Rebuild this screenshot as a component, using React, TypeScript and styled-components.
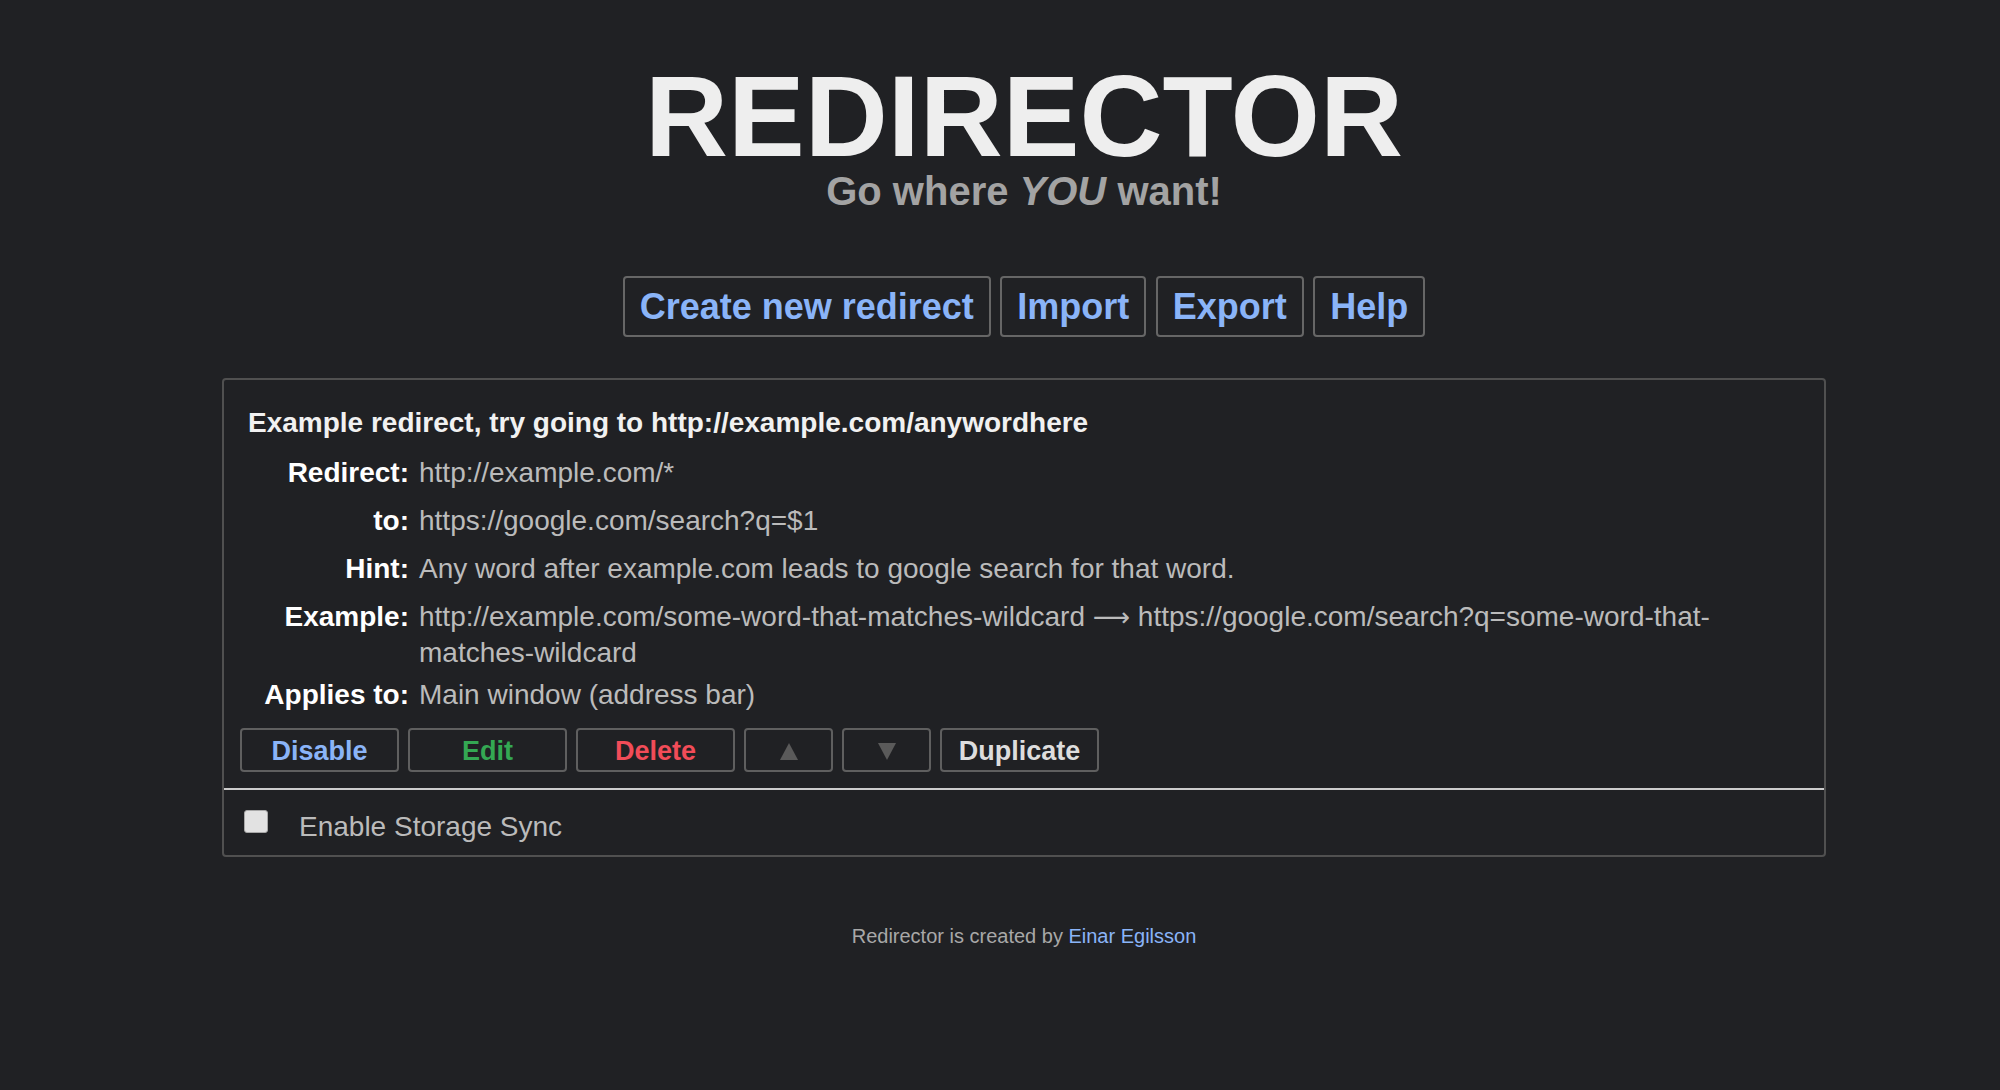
import React from 'react';
import styled, {createGlobalStyle} from 'styled-components';

const GlobalStyle = createGlobalStyle`
  body {
    margin: 0;
    background: #202124;
    font-family: "Liberation Sans", Arial, sans-serif;
    color: #bbbbbb;
  }
`;

type Rule = {
    label: string,
    value: React.ReactNode
}

const Triangle: React.FC<{ down?: boolean }> = ({down}) => (
    <svg width="18" height="17" viewBox="0 0 18 17">
        {down
            ? <polygon points="0,0 18,0 9,17" fill="#5a5a5a"/>
            : <polygon points="9,0 18,17 0,17" fill="#5a5a5a"/>}
    </svg>
);

export default function App() {
    const rules: Rule[] = [
        {label: 'Redirect:', value: 'http://example.com/*'},
        {label: 'to:', value: 'https://google.com/search?q=$1'},
        {label: 'Hint:', value: 'Any word after example.com leads to google search for that word.'},
        {
            label: 'Example:',
            value: <>http://example.com/some-word-that-matches-wildcard <Arrow>⟶</Arrow> https://google.com/search?q=some-word-that-matches-wildcard</>
        },
        {label: 'Applies to:', value: 'Main window (address bar)'},
    ];

    return (
        <>
            <GlobalStyle/>
            <Page>
                <Title>REDIRECTOR</Title>
                <Subtitle>Go where <em>YOU</em> want!</Subtitle>

                <Menu>
                    <MenuButton>Create new redirect</MenuButton>
                    <MenuButton>Import</MenuButton>
                    <MenuButton>Export</MenuButton>
                    <MenuButton>Help</MenuButton>
                </Menu>

                <Card>
                    <RedirectItem>
                        <Details>
                            <ItemTitle>Example redirect, try going to http://example.com/anywordhere</ItemTitle>
                            <RuleGrid>
                                {rules.map(r => (
                                    <React.Fragment key={r.label}>
                                        <Label>{r.label}</Label>
                                        <Value>{r.value}</Value>
                                    </React.Fragment>
                                ))}
                            </RuleGrid>
                        </Details>
                        <Actions>
                            <ActionButton $color="#8ab4f8">Disable</ActionButton>
                            <ActionButton $color="#34a853">Edit</ActionButton>
                            <ActionButton $color="#f24c58">Delete</ActionButton>
                            <ActionButton $narrow><Triangle/></ActionButton>
                            <ActionButton $narrow><Triangle down/></ActionButton>
                            <ActionButton $color="#dddddd">Duplicate</ActionButton>
                        </Actions>
                    </RedirectItem>
                    <SyncRow>
                        <Checkbox type="checkbox"/>
                        <SyncLabel>Enable Storage Sync</SyncLabel>
                    </SyncRow>
                </Card>

                <Footer>
                    Redirector is created by <FooterLink href="#">Einar Egilsson</FooterLink>
                </Footer>
            </Page>
        </>
    )
}

const Page = styled.div`
  padding-left: 48px;
  padding-bottom: 40px;
  display: flex;
  flex-direction: column;
  align-items: center;
`;

const Title = styled.h1`
  margin: 61px 0 0;
  font-size: 115px;
  line-height: 110px;
  font-weight: bold;
  color: #eeeeee;
`;

const Subtitle = styled.div`
  font-size: 40px;
  line-height: 40px;
  font-weight: bold;
  color: #a3a3a3;
`;

const Menu = styled.div`
  margin-top: 65px;
  display: flex;
  gap: 9.5px;
`;

const MenuButton = styled.button`
  font-family: inherit;
  font-size: 36px;
  line-height: 41px;
  font-weight: bold;
  color: #8ab4f8;
  background: transparent;
  border: 2px solid #666666;
  border-radius: 4px;
  padding: 8px 15px 8px;
  cursor: pointer;
`;

const Card = styled.div`
  margin-top: 41px;
  width: 1604px;
  box-sizing: border-box;
  border: 2px solid #505050;
  border-radius: 4px;
`;

const RedirectItem = styled.div`
  padding: 25px 22px 16px 16px;
  border-bottom: 2px solid #cccccc;
`;

const Details = styled.div`
  padding-left: 6px;
`;

const ItemTitle = styled.div`
  padding-left: 2px;
  font-size: 28px;
  line-height: 36px;
  font-weight: bold;
  color: #f1f1f1;
`;

const RuleGrid = styled.div`
  margin-top: 8px;
  display: grid;
  grid-template-columns: 163px 1fr;
  column-gap: 10px;
  align-items: baseline;
  font-size: 28px;
`;

const Label = styled.div`
  text-align: right;
  font-weight: bold;
  line-height: 48px;
  color: #ffffff;
`;

const Value = styled.div`
  line-height: 36px;
  color: #bbbbbb;
`;

const Arrow = styled.span`
  font-family: "DejaVu Sans", sans-serif;
  font-size: 26px;
  line-height: 1;
  color: #bbbbbb;
`;

const Actions = styled.div`
  margin-top: 9px;
  display: flex;
  gap: 9px;
`;

const ActionButton = styled.button<{ $color?: string, $narrow?: boolean }>`
  width: ${p => p.$narrow ? '89px' : '159px'};
  height: 44px;
  box-sizing: border-box;
  display: flex;
  align-items: center;
  justify-content: center;
  font-family: inherit;
  font-size: 27px;
  line-height: 30px;
  font-weight: bold;
  color: ${p => p.$color || '#5a5a5a'};
  background: transparent;
  border: 2px solid #5f5f5f;
  border-radius: 4px;
  padding: 2px 0 0;
  cursor: pointer;
`;

const SyncRow = styled.div`
  display: flex;
  align-items: flex-start;
  padding: 21px 16px 12px 20px;
`;

const Checkbox = styled.input`
  appearance: none;
  margin: -1px 0 0;
  width: 24px;
  height: 23px;
  box-sizing: border-box;
  background: #e2e2e2;
  border: 1px solid #a8a8a8;
  border-radius: 3px;
`;

const SyncLabel = styled.span`
  margin-left: 31px;
  font-size: 28px;
  line-height: 32px;
  color: #bbbbbb;
`;

const Footer = styled.div`
  margin-top: 67px;
  font-size: 20px;
  line-height: 24px;
  color: #a8a8a8;
`;

const FooterLink = styled.a`
  color: #8ab4f8;
  text-decoration: none;
`;
